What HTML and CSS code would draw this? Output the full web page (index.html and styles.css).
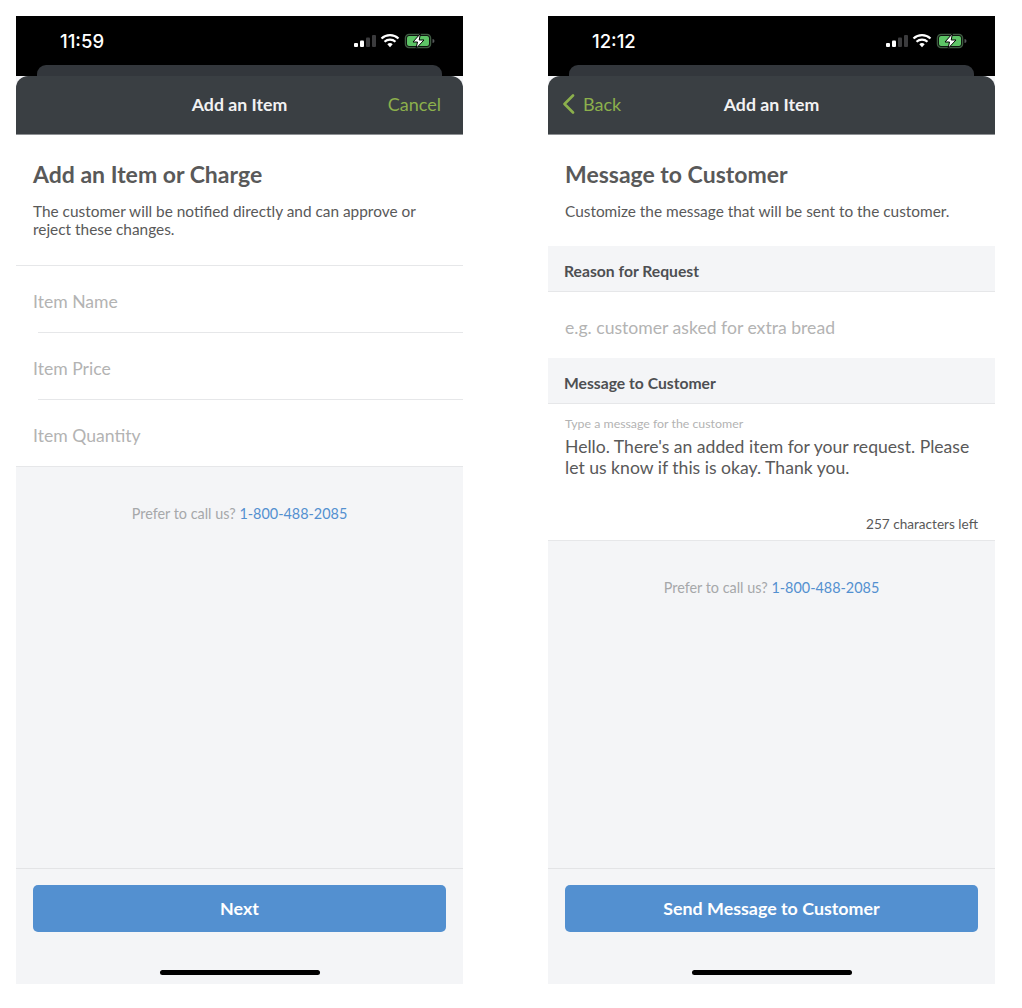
FILE: index.html
```html
<!DOCTYPE html>
<html lang="en">
<head>
<meta charset="utf-8">
<title>Add an Item</title>
<link rel="stylesheet" href="styles.css">
</head>
<body>
<main class="board">
  <section class="phone">
    <header class="status">
      <div class="status-row">
        <span class="time">11:59</span>
        <svg class="status-icons" width="82" height="16" viewBox="0 0 82 16">
          <g fill="#fff"><rect x="0" y="10" width="4" height="4" rx="1"/><rect x="6" y="7.500" width="4" height="6.500" rx="1"/></g>
          <g fill="#3b3b3d"><rect x="12" y="4.500" width="4" height="9.500" rx="1"/><rect x="18" y="2" width="4" height="12" rx="1"/></g>
          <g fill="none" stroke="#fff" stroke-width="2.200"><path d="M27.500 5.500a12.500 12.500 0 0 1 17 0"/><path d="M30.500 8.800a8.300 8.300 0 0 1 11 0"/></g>
          <path d="M33.300 11.300a4 4 0 0 1 5.400 0L36 14.200z" fill="#fff"/>
          <rect x="51.500" y="1.500" width="25" height="13" rx="3.500" fill="none" stroke="#3f5a42" stroke-width="1.500"/>
          <rect x="53" y="3" width="22" height="10" rx="2" fill="#5dc466"/>
          <path d="M78.500 6v4a2 2 0 0 0 0-4z" fill="#55585a"/>
          <path d="M66.500 0.500 59 9h4.500l-1.500 6.500L70 7h-4.800z" fill="#fff" stroke="#000" stroke-width="1"/>
        </svg>
      </div>
      <div class="sheet-back"></div>
    </header>
    <nav class="nav">
      <span class="nav-side"></span>
      <span class="nav-title">Add an Item</span>
      <span class="nav-side nav-right"><a class="nav-link">Cancel</a></span>
    </nav>
    <div class="intro">
      <h1 class="title">Add an Item or Charge</h1>
      <p class="lead">The customer will be notified directly and can approve or reject these changes.</p>
    </div>
    <div class="fields">
      <div class="field"><span class="placeholder">Item Name</span></div>
      <div class="field"><span class="placeholder">Item Price</span></div>
      <div class="field"><span class="placeholder">Item Quantity</span></div>
    </div>
    <div class="rest">
      <p class="call">Prefer to call us? <a class="phone-link">1-800-488-2085</a></p>
    </div>
    <footer class="actions">
      <button class="primary">Next</button>
      <div class="home"></div>
    </footer>
  </section>

  <section class="phone">
    <header class="status">
      <div class="status-row">
        <span class="time">12:12</span>
        <svg class="status-icons" width="82" height="16" viewBox="0 0 82 16">
          <g fill="#fff"><rect x="0" y="10" width="4" height="4" rx="1"/><rect x="6" y="7.500" width="4" height="6.500" rx="1"/></g>
          <g fill="#3b3b3d"><rect x="12" y="4.500" width="4" height="9.500" rx="1"/><rect x="18" y="2" width="4" height="12" rx="1"/></g>
          <g fill="none" stroke="#fff" stroke-width="2.200"><path d="M27.500 5.500a12.500 12.500 0 0 1 17 0"/><path d="M30.500 8.800a8.300 8.300 0 0 1 11 0"/></g>
          <path d="M33.300 11.300a4 4 0 0 1 5.400 0L36 14.200z" fill="#fff"/>
          <rect x="51.500" y="1.500" width="25" height="13" rx="3.500" fill="none" stroke="#3f5a42" stroke-width="1.500"/>
          <rect x="53" y="3" width="22" height="10" rx="2" fill="#5dc466"/>
          <path d="M78.500 6v4a2 2 0 0 0 0-4z" fill="#55585a"/>
          <path d="M66.500 0.500 59 9h4.500l-1.500 6.500L70 7h-4.800z" fill="#fff" stroke="#000" stroke-width="1"/>
        </svg>
      </div>
      <div class="sheet-back"></div>
    </header>
    <nav class="nav">
      <span class="nav-side">
        <a class="nav-link back">
          <svg width="13" height="20" viewBox="0 0 13 20"><path d="M11 1.500 2.500 10l8.500 8.500" fill="none" stroke="#8cb04c" stroke-width="2.600" stroke-linecap="round" stroke-linejoin="round"/></svg>
          Back
        </a>
      </span>
      <span class="nav-title">Add an Item</span>
      <span class="nav-side"></span>
    </nav>
    <div class="intro intro-short">
      <h1 class="title">Message to Customer</h1>
      <p class="lead">Customize the message that will be sent to the customer.</p>
    </div>
    <h2 class="band">Reason for Request</h2>
    <div class="reason"><span class="placeholder">e.g. customer asked for extra bread</span></div>
    <h2 class="band">Message to Customer</h2>
    <div class="message">
      <span class="msg-label">Type a message for the customer</span>
      <p class="msg-text">Hello. There's an added item for your request. Please let us know if this is okay. Thank you.</p>
      <span class="counter">257 characters left</span>
    </div>
    <div class="rest">
      <p class="call">Prefer to call us? <a class="phone-link">1-800-488-2085</a></p>
    </div>
    <footer class="actions">
      <button class="primary">Send Message to Customer</button>
      <div class="home"></div>
    </footer>
  </section>
</main>
</body>
</html>
```
FILE: styles.css
```css
* { box-sizing: border-box; }
html, body { margin: 0; padding: 0; background: #fff; }
body { font-family: Lato, "Open Sans", sans-serif; color: #555; }
.board { display: flex; gap: 85px; padding: 16px; }
.phone { width: 447px; height: 968px; display: flex; flex-direction: column; background: #f4f5f7; overflow: hidden; }

.status { background: #000; height: 60px; display: flex; flex-direction: column; justify-content: flex-end; }
.status-row { flex: 1; display: flex; align-items: center; justify-content: space-between; padding: 0 27px 0 44px; }
.time { font-family: Inter, Roboto, sans-serif; font-size: 18.5px; font-weight: 500; color: #fff; }
.status-icons { display: block; margin-top: 1px; }
.sheet-back { height: 11px; margin: 0 21px; background: #33373c; border-radius: 9px 9px 0 0; }

.nav { height: 59px; background: #3a3f43; border-radius: 12px 12px 0 0; border-bottom: 1px solid #8e9194; display: flex; align-items: center; padding: 0 22px 2px; }
.nav-side { flex: 1; display: flex; }
.nav-right { justify-content: flex-end; }
.nav-title { color: #f2f2f2; font-size: 17.7px; font-weight: 700; }
.nav-link { color: #8cb04c; font-size: 18px; }
.back { display: flex; align-items: center; gap: 8px; margin-left: -8px; }

.intro { background: #fff; height: 130px; padding: 24px 17px 0; }
.intro-short { height: 111px; }
.title { margin: 0; font-size: 23px; line-height: 30px; font-weight: 700; color: #595959; }
.lead { margin: 13px 0 0; font-size: 15.4px; line-height: 18px; color: #595959; }

.fields { background: #fff; border-top: 1px solid #e6e7e9; border-bottom: 1px solid #e6e7e9; padding-left: 22px; }
.field { height: 67px; display: flex; align-items: center; padding-top: 5px; border-bottom: 1px solid #e6e7e9; }
.field:last-child { border-bottom: 0; height: 66px; }
.field .placeholder { margin-left: -5px; }
.placeholder { font-size: 17.6px; color: #b3b3b3; }

.band { margin: 0; height: 46px; display: flex; align-items: center; padding: 5px 16px 0; font-size: 15.7px; font-weight: 700; color: #4d4f52; background: #f4f5f7; border-bottom: 1px solid #e6e7e9; }
.reason { height: 66px; background: #fff; display: flex; align-items: center; padding: 4px 17px 0; }
.message { height: 137px; background: #fff; display: flex; flex-direction: column; padding: 12px 17px 0; border-bottom: 1px solid #e6e7e9; }
.msg-label { font-size: 12.35px; line-height: 15px; color: #b3b3b3; }
.msg-text { margin: 5px 0 0; font-size: 17.6px; line-height: 21px; color: #595959; }
.counter { margin-top: auto; margin-bottom: 7px; align-self: flex-end; font-size: 13.6px; line-height: 17px; color: #595959; }

.rest { flex: 1; padding-top: 38px; }
.call { margin: 0; text-align: center; font-size: 14.4px; line-height: 18px; color: #a6a8aa; }
.phone-link { color: #5390d0; }

.actions { height: 116px; border-top: 1px solid #e3e4e6; padding: 16px 17px 0; display: flex; flex-direction: column; align-items: center; }
.primary { width: 100%; height: 47px; border: 0; border-radius: 5px; padding: 0 0 2px; background: #5390d0; color: #fff; font-family: inherit; font-size: 17.85px; font-weight: 700; }
.home { width: 160px; height: 5px; margin-top: 38px; border-radius: 3px; background: #000; }
```
